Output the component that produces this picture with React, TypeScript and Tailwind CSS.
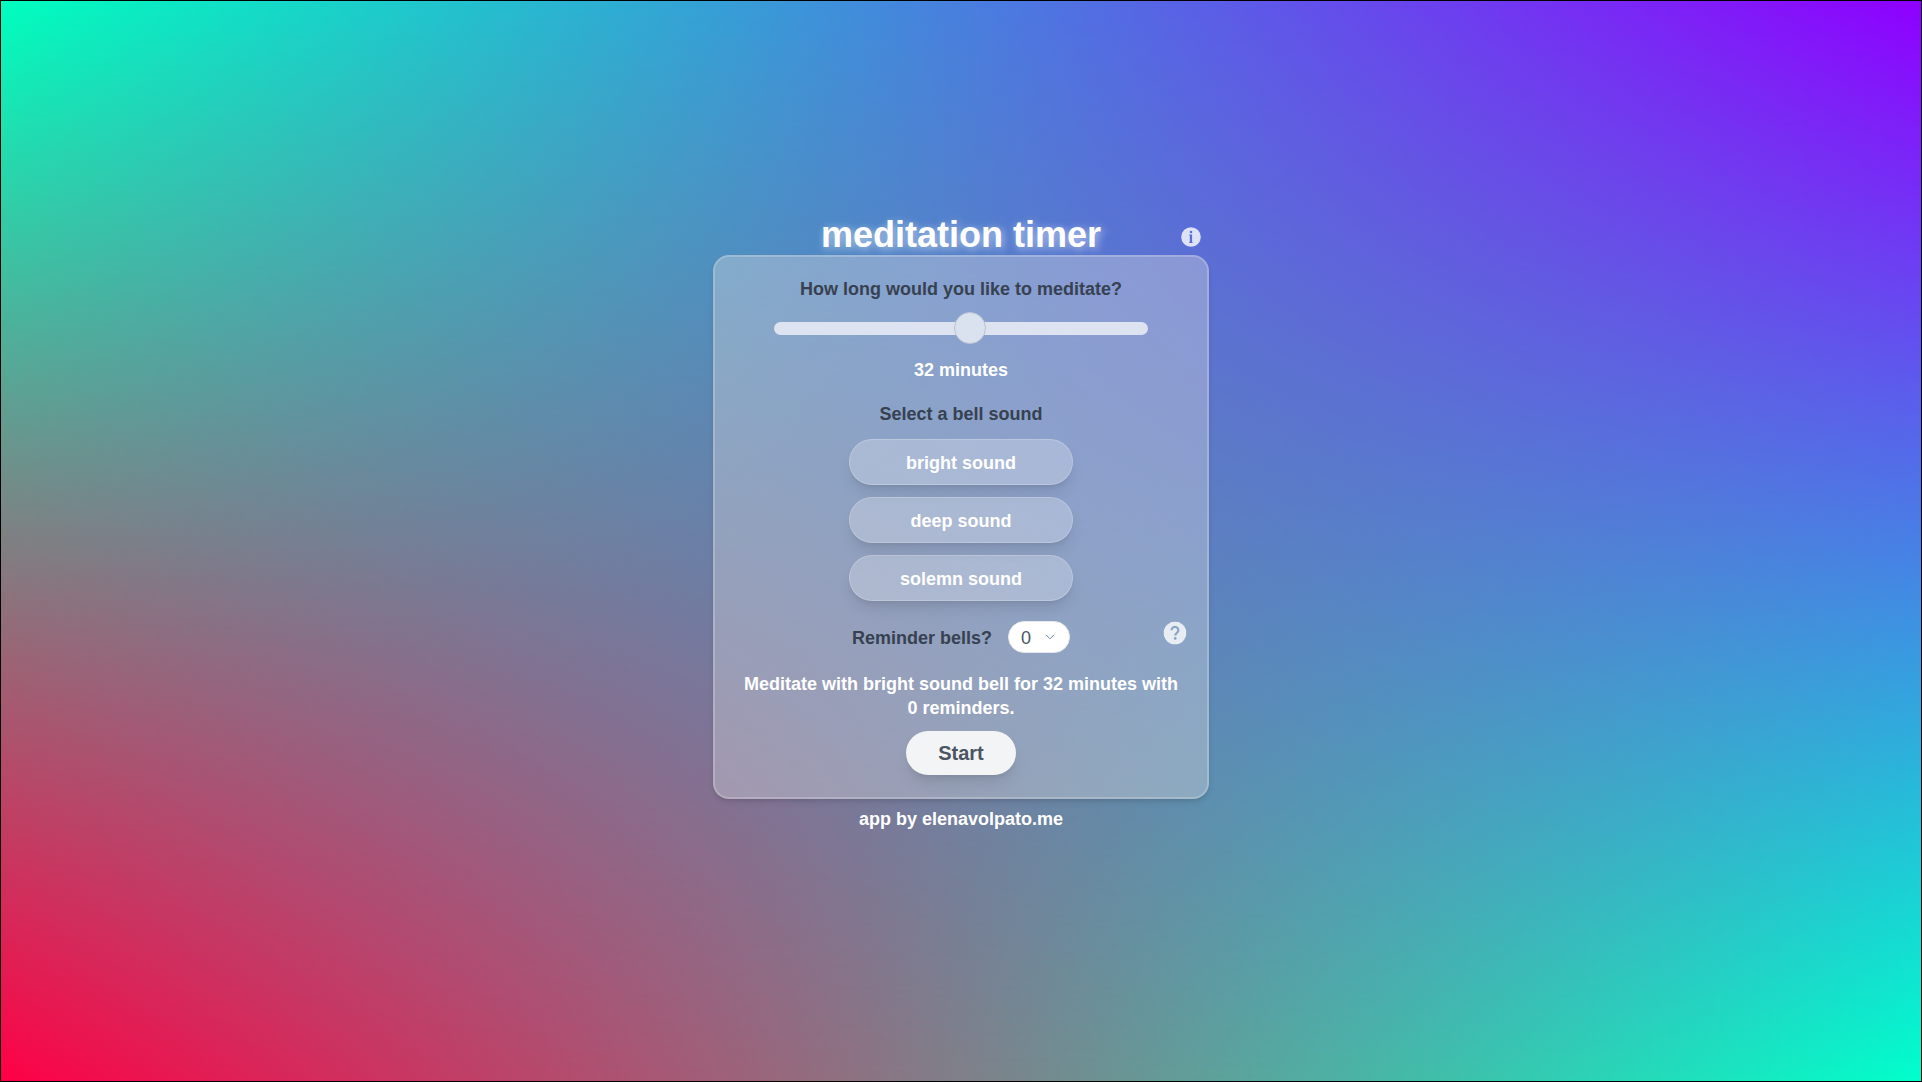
import { useState } from "react";

const SOUNDS = ["bright sound", "deep sound", "solemn sound"];

function InfoIcon() {
  return (
    <svg viewBox="0 0 20 20" className="size-5 fill-white/80">
      <path
        fillRule="evenodd"
        d="M10 .2a9.8 9.8 0 1 0 0 19.6A9.8 9.8 0 0 0 10 .2ZM10 3.7a1.3 1.3 0 1 1 0 2.6 1.3 1.3 0 0 1 0-2.6ZM8.2 7.5h2.9v7.6h.4v1H8.2v-1h.6V8.5h-.6Z"
      />
    </svg>
  );
}

function HelpIcon() {
  return (
    <svg viewBox="0 0 24 24" className="mb-2 ml-auto mr-5 size-6">
      <mask id="help-cutout">
        <circle cx="12" cy="12" r="11.5" fill="white" />
        <path
          d="M8.6 9.2a3.4 3.2 0 1 1 5.4 2.5c-1.2.9-1.8 1.3-1.8 2.9"
          fill="none"
          stroke="black"
          strokeWidth="2.2"
        />
        <circle cx="12.2" cy="17.4" r="1.4" fill="black" />
      </mask>
      <circle cx="12" cy="12" r="11.5" className="fill-white/80" mask="url(#help-cutout)" />
    </svg>
  );
}

export default function App() {
  const [minutes] = useState(32);
  const [sound, setSound] = useState("bright sound");
  const reminders = 0;

  return (
    <div className="relative isolate flex h-[1082px] w-[1922px] flex-col items-center border border-black font-['Liberation_Sans',Arial,sans-serif] text-lg font-semibold text-white">
      <div className="absolute inset-0 -z-10 bg-linear-to-r/srgb from-[#00ffbf] to-[#9000ff]" />
      <div className="absolute inset-0 -z-10 bg-linear-to-r/srgb from-[#ff0045] to-[#00ffcc] [mask-image:linear-gradient(to_bottom,transparent,black)]" />

      <header className="mt-[214px] flex h-10 w-[496px] items-center justify-center">
        <span className="w-10" />
        <h1 className="flex-1 text-center text-4xl leading-10 font-bold [text-shadow:2px_2px_8px_rgba(255,255,255,0.6)]">
          meditation timer
        </h1>
        <span className="flex w-10 items-center pt-1 pl-3">
          <InfoIcon />
        </span>
      </header>

      <main className="flex h-[544px] w-[496px] flex-col items-center rounded-2xl border-2 border-white/20 bg-[#d1d5db]/40 text-center shadow-md">
        <h2 className="mt-[18px] leading-7 text-[#374151]">How long would you like to meditate?</h2>

        <div className="mt-[9px] flex h-8 w-[374px] items-center">
          <div className="relative h-[13px] w-full rounded-full bg-[#dde3f0]">
            <div className="absolute -top-[10px] left-[180px] size-8 rounded-full border border-[#bcc3d3] bg-[#dae2ef]" />
          </div>
        </div>

        <p className="mt-3 leading-7">{minutes} minutes</p>
        <h2 className="mt-4 leading-7 text-[#374151]">Select a bell sound</h2>

        <div className="mt-[11px] flex flex-col gap-3">
          {SOUNDS.map((s) => (
            <button
              key={s}
              onClick={() => setSound(s)}
              className="h-[46px] w-56 rounded-full border border-white/20 bg-white/25 pt-0.5 leading-7 shadow-lg"
            >
              {s}
            </button>
          ))}
        </div>

        <div className="mt-5 flex h-8 w-full items-center pl-[137px]">
          <span className="pt-0.5 text-[#374151]">Reminder bells?</span>
          <span className="ml-4 flex h-8 w-[62px] items-center rounded-full border border-gray-200 bg-white pl-3 font-normal text-[#4b5563]">
            <span className="pt-0.5">0</span>
            <svg viewBox="0 0 10 6" className="ml-[14px] h-[6px] w-[10px] fill-none stroke-[#64809f]">
              <path d="M1 .8 5 4.8 9 .8" />
            </svg>
          </span>
          <HelpIcon />
        </div>

        <p className="mt-[19px] w-[440px] leading-6">
          Meditate with {sound} bell for {minutes} minutes with {reminders} reminders.
        </p>
        <button className="mt-[11px] h-11 w-[110px] rounded-full bg-gray-100 text-xl leading-7 font-bold text-[#4b5563] shadow-lg">
          Start
        </button>
      </main>

      <footer className="mt-[6px] leading-7">app by elenavolpato.me</footer>
    </div>
  );
}
